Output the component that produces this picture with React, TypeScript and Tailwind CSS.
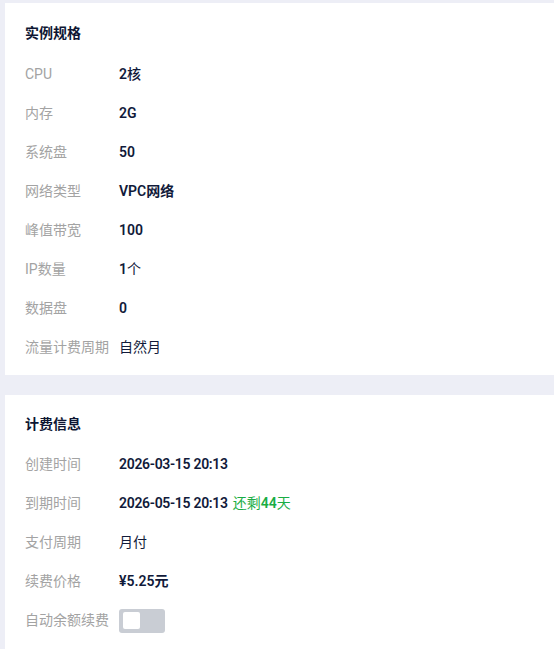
import React from "react";

type Row = { label: string; value: React.ReactNode };

const num = "font-semibold";
const date = "font-semibold tracking-[-0.3px]";

const specRows: Row[] = [
  { label: "CPU", value: <><span className={num}>2</span><span className="font-medium">核</span></> },
  { label: "内存", value: <span className={num}>2G</span> },
  { label: "系统盘", value: <span className={num}>50</span> },
  { label: "网络类型", value: <span className={num}>VPC网络</span> },
  { label: "峰值带宽", value: <span className={num}>100</span> },
  { label: "IP数量", value: <><span className={num}>1</span><span className="font-normal">个</span></> },
  { label: "数据盘", value: <span className={num}>0</span> },
  { label: "流量计费周期", value: <span className="font-normal">自然月</span> },
];

function Toggle() {
  return (
    <div className="flex h-[24px] w-[46px] items-center rounded-[3px] bg-[#c9cdd4] pl-[4px]">
      <div className="h-[17px] w-[17px] rounded-[2px] bg-white" />
    </div>
  );
}

const billRows: Row[] = [
  { label: "创建时间", value: <span className={date}>2026-03-15 20:13</span> },
  {
    label: "到期时间",
    value: (
      <span className="flex items-center gap-[5px]">
        <span className={date}>2026-05-15 20:13</span>
        <span className="font-normal text-[#19ad44]">还剩<span className="font-semibold">44</span>天</span>
      </span>
    ),
  },
  { label: "支付周期", value: <span className="font-normal">月付</span> },
  { label: "续费价格", value: <span className={num}>¥5.25元</span> },
  { label: "自动余额续费", value: <Toggle /> },
];

function Card({
  title,
  rows,
  className,
  titleClass,
}: {
  title: string;
  rows: Row[];
  className?: string;
  titleClass?: string;
}) {
  return (
    <section className={`bg-white pl-5 ${className ?? ""}`}>
      <h2 className={`h-5 text-[14px] leading-5 font-bold text-[#0e1633] ${titleClass ?? ""}`}>{title}</h2>
      {rows.map((r) => (
        <div key={r.label} className="flex h-[39px] items-center">
          <div className="w-[94px] shrink-0 text-[14px] text-[#a3a3a3]">{r.label}</div>
          <div className="flex items-center text-[14px] text-[#111a3a]">{r.value}</div>
        </div>
      ))}
    </section>
  );
}

export default function App() {
  return (
    <div
      className="flex h-[649px] flex-col gap-5 overflow-hidden bg-[#edeef6] pl-[5px] pt-[3px]"
      style={{ fontFamily: '"Roboto", "Noto Sans CJK SC", sans-serif' }}
    >
      <Card title="实例规格" rows={specRows} className="pt-5 pb-2" titleClass="mb-3" />
      <Card title="计费信息" rows={billRows} className="flex-1 pt-[19px]" titleClass="mb-[11px]" />
    </div>
  );
}
